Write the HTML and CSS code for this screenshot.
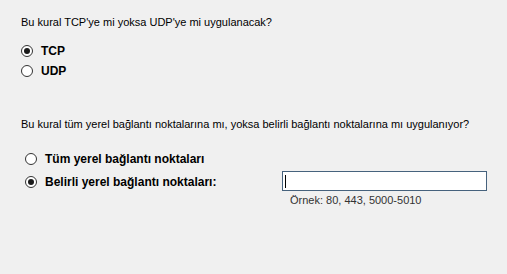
FILE: index.html
```html
<!DOCTYPE html>
<html lang="tr">
<head>
  <meta charset="UTF-8">
  <title>Protokol ve Bağlantı Noktaları</title>
  <link rel="stylesheet" href="styles.css">
</head>
<body>
  <div class="wizard">
    <p class="question">Bu kural TCP'ye mi yoksa UDP'ye mi uygulanacak?</p>
    <div class="group">
      <label class="radio-row"><span class="radio checked"></span><span class="label">TCP</span></label>
      <label class="radio-row"><span class="radio"></span><span class="label">UDP</span></label>
    </div>

    <p class="question q2">Bu kural tüm yerel bağlantı noktalarına mı, yoksa belirli bağlantı noktalarına mı uygulanıyor?</p>
    <div class="group ports">
      <label class="radio-row"><span class="radio"></span><span class="label">Tüm yerel bağlantı noktaları</span></label>
      <div class="port-line">
        <label class="radio-row choice"><span class="radio checked"></span><span class="label">Belirli yerel bağlantı noktaları:</span></label>
        <div class="port-field">
          <div class="textbox"><span class="caret"></span></div>
          <div class="hint">Örnek: 80, 443, 5000-5010</div>
        </div>
      </div>
    </div>
  </div>
</body>
</html>
```

FILE: styles.css
```css
*{margin:0;padding:0;box-sizing:border-box;}
body{background:#f0f0f0;font-family:'Liberation Sans',Arial,sans-serif;font-size:11px;color:#000;}
.wizard{padding:16px 0 0 21px;}
.question{line-height:13px;}
.q2{margin-top:37px;}
.group{margin-top:12px;display:flex;flex-direction:column;}
.ports{margin-top:17px;padding-left:4px;gap:1px;}
.radio-row{display:flex;align-items:center;height:20px;}
.ports .radio-row{height:22px;}
.radio{width:12px;height:12px;border:1px solid #333;border-radius:50%;background:#fff;display:flex;align-items:center;justify-content:center;flex-shrink:0;}
.radio.checked::after{content:"";width:6px;height:6px;border-radius:50%;background:#1a1a1a;}
.label{margin-left:8px;font-weight:bold;font-size:12px;}
.port-line{display:flex;align-items:flex-start;}
.choice{width:257px;}
.port-field{display:flex;flex-direction:column;}
.textbox{width:205px;height:20px;border:1px solid #46627d;background:#fff;display:flex;align-items:center;padding-left:2px;}
.caret{width:1px;height:13px;background:#000;}
.hint{margin:3px 0 0 8px;color:#333;}
```
